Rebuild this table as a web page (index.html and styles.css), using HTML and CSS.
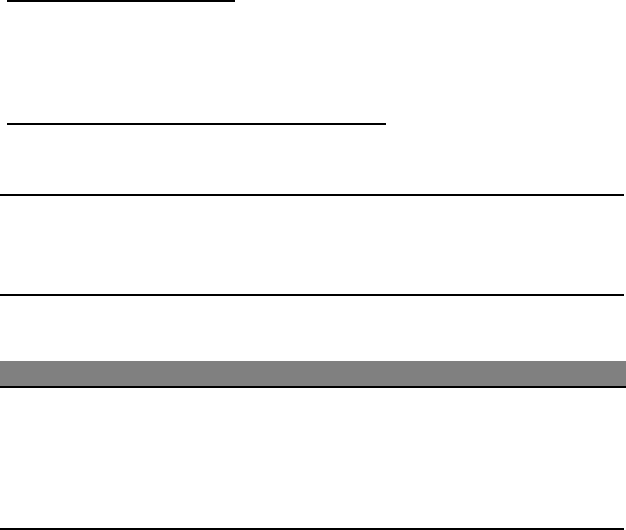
FILE: index.html
```html
<!DOCTYPE html>
<html>
<head>
<meta charset="utf-8">
<link rel="stylesheet" href="styles.css">
</head>
<body>
<div class="page">
  <div class="rule rule-short"></div>
  <div class="rule rule-mid"></div>
  <div class="rule rule-full gap-a"></div>
  <div class="rule rule-full gap-b"></div>
  <div class="band"></div>
  <div class="rule rule-full gap-c"></div>
</div>
</body>
</html>
```
FILE: styles.css
```css
html, body {
  margin: 0;
  padding: 0;
  background: #ffffff;
}
.page {
  width: 626px;
  height: 530px;
  display: flex;
  flex-direction: column;
  font-family: "Liberation Sans", Arial, sans-serif;
}
.rule {
  height: 2px;
  background: #000000;
  flex: none;
}
.rule-short {
  margin-top: 0;
  margin-left: 7px;
  width: 228px;
}
.rule-mid {
  margin-top: 121px;
  margin-left: 7px;
  width: 379px;
}
.rule-full {
  width: 624px;
}
.gap-a {
  margin-top: 69px;
}
.gap-b {
  margin-top: 98px;
}
.band {
  margin-top: 65px;
  height: 25px;
  width: 626px;
  background: #808080;
  border-bottom: 2px solid #000000;
  flex: none;
}
.gap-c {
  margin-top: 140px;
}
```
